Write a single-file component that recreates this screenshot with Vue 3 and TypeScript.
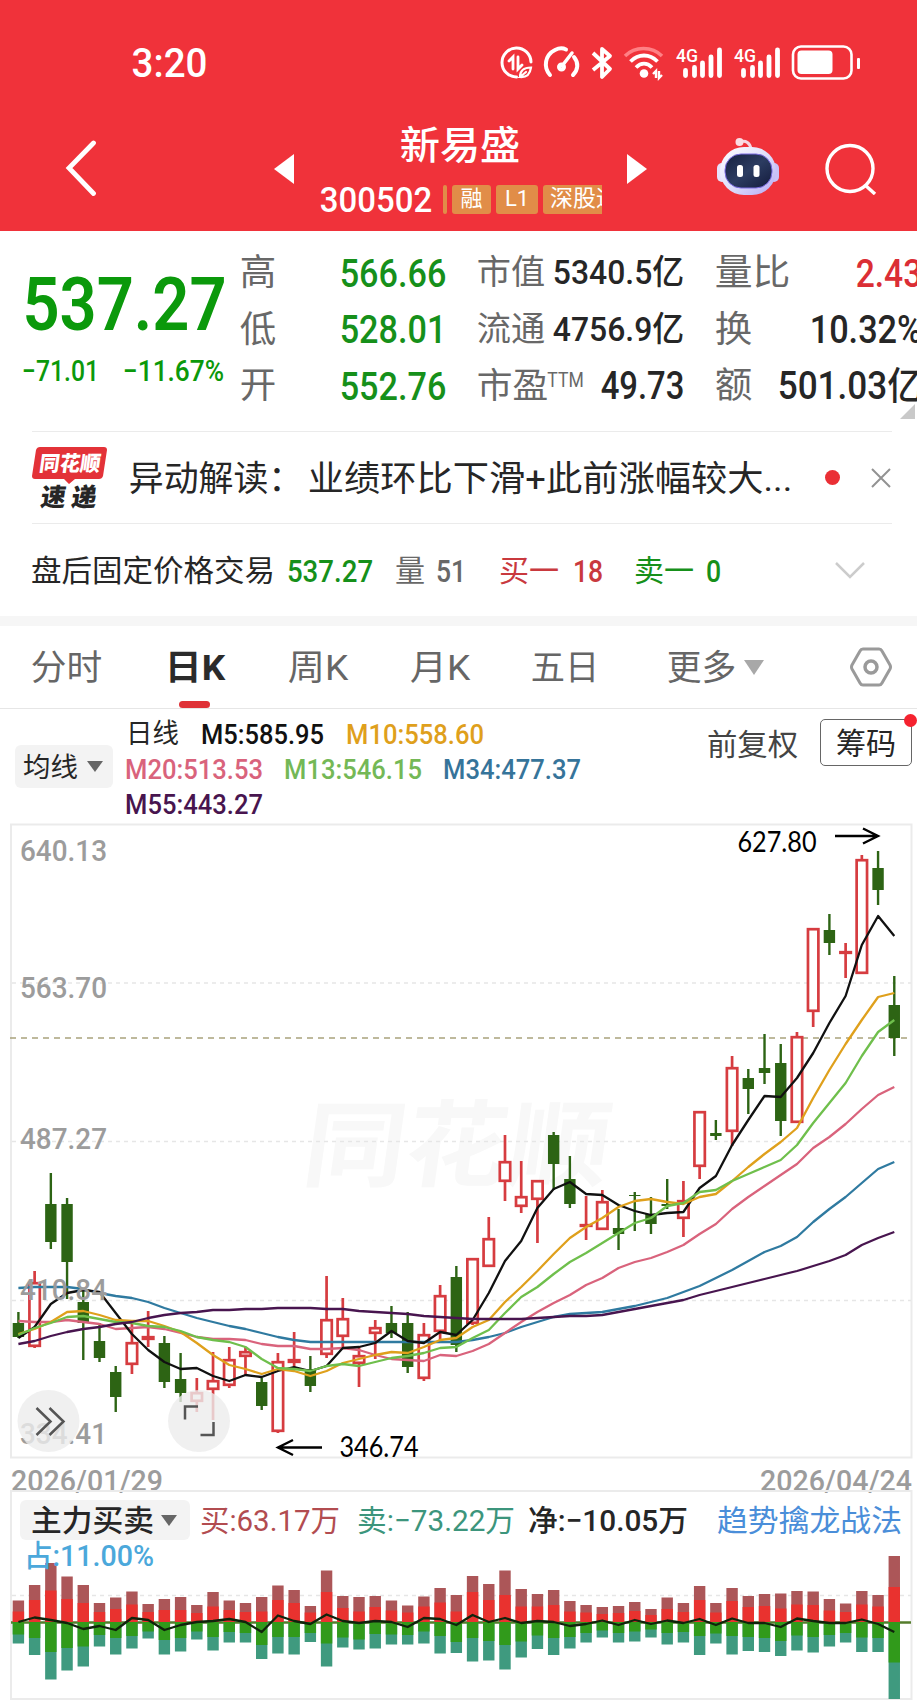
<script setup lang="ts">
import { h, type FunctionalComponent } from 'vue'

interface FitProps {
  t: string
  w: number
  s: number
}

// One line of text fitted to an exact width, centred on its own box.
const Fit: FunctionalComponent<FitProps> = (p) => {
  const pad = p.s * 0.035
  return h('svg', { width: p.w, height: p.s, style: 'display:block;overflow:visible;flex:none' }, [
    h(
      'text',
      {
        x: -pad,
        y: p.s * 0.86,
        'font-size': p.s,
        fill: 'currentColor',
        textLength: p.w + pad * 2,
        lengthAdjust: 'spacingAndGlyphs',
      },
      p.t,
    ),
  ])
}
Fit.props = ['t', 'w', 's']

type Kind = 'r' | 'g'
type Candle = [Kind, number, number, number, number]

const step = 16.22
const cx = (i: number): number => 18.4 + i * step

// kind, high, body top, body bottom, low
const candles: Candle[] = [
  ['g', 1312, 1323, 1337, 1338], ['r', 1271, 1282, 1347, 1348], ['g', 1173, 1204, 1242, 1249],
  ['g', 1198, 1204, 1262, 1299], ['g', 1291, 1302, 1323, 1360], ['g', 1323, 1341, 1358, 1362],
  ['g', 1366, 1372, 1397, 1412], ['r', 1323, 1342, 1365, 1374], ['r', 1311, 1336, 1340, 1347],
  ['g', 1336, 1343, 1382, 1388], ['g', 1353, 1379, 1393, 1402], ['r', 1378, 1392, 1402, 1412],
  ['r', 1352, 1380, 1390, 1420], ['r', 1347, 1359, 1386, 1388], ['r', 1347, 1351, 1357, 1375],
  ['g', 1378, 1382, 1406, 1410], ['r', 1353, 1361, 1432, 1433], ['r', 1332, 1359, 1363, 1367],
  ['g', 1356, 1369, 1386, 1392], ['r', 1276, 1319, 1355, 1358], ['r', 1298, 1318, 1337, 1347],
  ['r', 1347, 1355, 1364, 1387], ['r', 1320, 1327, 1334, 1359], ['g', 1306, 1323, 1333, 1338],
  ['g', 1312, 1323, 1367, 1373], ['r', 1323, 1334, 1379, 1381], ['r', 1285, 1295, 1332, 1341],
  ['g', 1266, 1277, 1345, 1352], ['r', 1258, 1258, 1324, 1325], ['r', 1217, 1238, 1267, 1267],
  ['r', 1135, 1161, 1182, 1201], ['r', 1161, 1196, 1207, 1213], ['r', 1180, 1180, 1200, 1243],
  ['g', 1132, 1135, 1164, 1190], ['g', 1156, 1179, 1204, 1208], ['r', 1196, 1224, 1227, 1240],
  ['r', 1190, 1201, 1230, 1230], ['g', 1209, 1228, 1234, 1250], ['g', 1192, 1195, 1196, 1231],
  ['g', 1197, 1214, 1224, 1234], ['g', 1179, 1204, 1206, 1209], ['r', 1181, 1200, 1219, 1237],
  ['r', 1111, 1111, 1167, 1179], ['g', 1120, 1133, 1136, 1140], ['r', 1056, 1067, 1132, 1146],
  ['g', 1069, 1078, 1089, 1114], ['g', 1034, 1068, 1073, 1084], ['g', 1044, 1063, 1121, 1136],
  ['r', 1032, 1036, 1123, 1123], ['r', 928, 928, 1012, 1027], ['g', 914, 930, 943, 955],
  ['r', 943, 951, 954, 978], ['r', 855, 859, 974, 974], ['g', 851, 868, 890, 905],
  ['g', 976, 1005, 1038, 1056],
]

const averages: { color: string; ys: number[] }[] = [
  { color: '#2f7aa0', ys: [1288, 1287, 1287, 1287, 1289, 1293, 1296, 1298, 1302, 1308, 1313, 1318, 1322, 1326, 1329, 1333, 1337, 1340, 1342, 1342, 1342, 1342, 1342, 1342, 1342, 1342, 1342, 1342, 1340, 1337, 1333, 1327, 1322, 1317, 1314, 1313, 1312, 1309, 1306, 1302, 1298, 1292, 1286, 1278, 1270, 1261, 1252, 1246, 1237, 1222, 1209, 1197, 1183, 1169, 1162] },
  { color: '#d9637c', ys: [1321, 1322, 1322, 1320, 1322, 1324, 1329, 1328, 1327, 1329, 1333, 1337, 1339, 1339, 1340, 1344, 1346, 1346, 1349, 1349, 1348, 1350, 1355, 1359, 1360, 1361, 1355, 1356, 1351, 1344, 1333, 1322, 1312, 1303, 1295, 1285, 1278, 1268, 1262, 1258, 1252, 1245, 1234, 1224, 1209, 1197, 1186, 1175, 1164, 1148, 1137, 1124, 1109, 1095, 1087] },
  { color: '#111111', ys: [1338, 1327, 1304, 1293, 1290, 1292, 1313, 1334, 1350, 1362, 1369, 1368, 1376, 1381, 1375, 1377, 1371, 1367, 1371, 1366, 1348, 1347, 1343, 1331, 1341, 1343, 1332, 1335, 1320, 1293, 1261, 1241, 1208, 1189, 1182, 1194, 1195, 1205, 1211, 1215, 1213, 1212, 1188, 1176, 1145, 1120, 1096, 1097, 1078, 1053, 1023, 996, 945, 916, 936] },
  { color: '#dfa01c', ys: [1334, 1329, 1322, 1312, 1311, 1315, 1320, 1321, 1321, 1326, 1332, 1343, 1355, 1365, 1369, 1374, 1369, 1371, 1376, 1371, 1363, 1359, 1355, 1352, 1353, 1347, 1340, 1338, 1327, 1320, 1302, 1287, 1271, 1254, 1238, 1227, 1218, 1207, 1201, 1199, 1202, 1204, 1197, 1194, 1181, 1167, 1154, 1142, 1128, 1098, 1070, 1044, 1020, 997, 993] },
  { color: '#6fbf4c', ys: [1335, 1328, 1323, 1317, 1316, 1319, 1322, 1323, 1326, 1327, 1331, 1337, 1340, 1342, 1347, 1359, 1368, 1369, 1371, 1366, 1364, 1366, 1362, 1358, 1356, 1353, 1348, 1347, 1338, 1330, 1313, 1297, 1287, 1274, 1262, 1253, 1243, 1233, 1223, 1218, 1206, 1203, 1192, 1190, 1181, 1174, 1167, 1160, 1145, 1123, 1103, 1083, 1056, 1032, 1020] },
  { color: '#48154f', ys: [1344, 1341, 1336, 1332, 1329, 1327, 1324, 1322, 1318, 1315, 1313, 1312, 1310, 1310, 1309, 1309, 1308, 1308, 1308, 1309, 1309, 1311, 1312, 1313, 1314, 1316, 1317, 1318, 1319, 1319, 1319, 1319, 1318, 1317, 1316, 1316, 1315, 1312, 1309, 1306, 1303, 1300, 1295, 1291, 1287, 1283, 1279, 1275, 1271, 1266, 1261, 1255, 1245, 1238, 1232] },
]

const points = (ys: number[]): string => ys.map((y, i) => `${cx(i).toFixed(1)},${y}`).join(' ')

// total buy, large buy, large sell, total sell, net
const flows: [number, number, number, number, number][] = [
  [21.5, 10.5, 12.5, 21.5, 0], [37, 22, 16, 33, 4.5], [59, 31.5, 30, 57.5, 2], [45.5, 23, 26, 48.5, -1],
  [37, 19, 24.5, 44.5, -7], [19, 10, 13, 24.5, -4], [24.5, 13, 16, 32.5, -8], [30.5, 17.5, 14, 26.5, 4],
  [18, 10, 9.5, 16.5, 2], [23, 12, 18, 32.5, -8], [25, 12, 16, 29.5, -3], [17, 9, 9.5, 17.5, 0],
  [30, 15.5, 15, 28.5, 1], [21.5, 12, 10, 20.5, 3], [19, 10, 11, 20.5, 0], [25, 10.5, 23, 37, -10],
  [36.5, 22, 15, 31.5, 6.5], [32, 19, 15, 32.5, 1], [16, 9.5, 11, 20, -2], [51.5, 30, 21.5, 44.5, 7.5],
  [26, 14, 15.5, 25.5, 1], [25, 10.5, 17.5, 27.5, -1], [26, 15, 12, 26.5, 1], [21.5, 11.5, 12.5, 22.5, 0],
  [16.5, 9.5, 13, 22.5, -5], [25.5, 15.5, 9.5, 21.5, 4], [34, 19.5, 14, 31.5, 3], [27, 10.5, 20, 31, -3],
  [46, 30, 16, 39.5, 7], [38, 22, 19, 38.5, 0], [51.5, 27, 23, 47.5, 4], [33, 15.5, 19.5, 35.5, -1],
  [28, 15.5, 13.5, 27, 1], [32, 17, 16, 33, 0], [21, 10.5, 15, 26.5, -4], [17, 9.5, 11, 20.5, -2],
  [15, 8, 8.5, 15.5, 1.5], [16, 9, 11, 20.5, -3], [20, 11, 9.5, 19.5, 2], [13, 7, 7.5, 15.5, -2],
  [24.5, 13, 11, 22.5, 1.5], [19, 10, 10, 20.5, -1], [36, 22, 14, 33, 3], [19, 9.5, 11.5, 21.5, -3],
  [34, 21, 14, 32.5, 3.5], [26, 15, 15, 29, -1], [28, 16, 16, 30, -1], [28.5, 13.5, 19, 34, -5],
  [31, 17.5, 13.5, 28.5, 3.5], [30.5, 17, 15, 30.5, 1], [23, 11.5, 13, 24.5, -1], [18.5, 10, 11, 20.5, -1],
  [31, 17.5, 15.5, 30, 2.5], [27, 15.5, 16, 30, -2], [66, 35, 40.5, 77, -10],
]
const net = points(flows.map((f) => 1622 - f[4]))

const axis = [
  { t: '640.13', y: 861 },
  { t: '563.70', y: 997.5 },
  { t: '487.27', y: 1148.5 },
  { t: '410.84', y: 1299.5 },
  { t: '334.41', y: 1443.5 },
]
</script>

<template>
  <main class="app">
    <header class="top">
      <div class="status">
        <Fit class="m" t="3:20" :w="73" :s="40" />
        <svg class="icons" width="370" height="44" viewBox="490 41 370 44" fill="none" stroke="#fff">
          <g stroke-width="3" stroke-linecap="round">
            <path d="M531 62a14.5 14.5 0 1 0-14.5 15" />
            <path d="M509 61l4-4v12M518 57v12l4-4" stroke-width="2.800" />
            <path d="M520 77c0-7 4-9.500 11-9.500-1 7-4 10-11 9.500l6-5" stroke-width="2.200" />
          </g>
          <g stroke-width="4" stroke-linecap="round">
            <path d="M550 75c-7-8-5-20 5-25 4-2 8-2 11-.5M574 57c5 6 4 13-1 18" />
            <path d="M572 53l-10 13" stroke-width="3.500" />
            <circle cx="561.500" cy="67" r="2.500" />
          </g>
          <path d="M593 53l17 16-8 8V49l8 7-17 14" stroke-width="3.800" stroke-linejoin="round" />
          <path d="M625 56c10-10 27-10 37 0" stroke="#ff8085" stroke-width="3.500" />
          <path d="M630.500 61.500c8-8 19-8 27 0M636 67.500c5-5 11-5 16 0" stroke-width="3.800" />
          <circle cx="644" cy="73.500" r="4.300" fill="#fff" stroke="none" />
          <path d="M653 74l3-3v7M659 71v7l3-3" stroke-width="2.400" />
          <g v-for="dx in [0, 58]" :key="dx" :transform="`translate(${dx} 0)`" stroke-width="4.800" stroke-linecap="round">
            <text class="net" x="676" y="61.500" textLength="22" lengthAdjust="spacingAndGlyphs">4G</text>
            <path d="M685.500 70.500v5M694.500 67.500v8M702.500 63v12.500M711 57v18.500M719.500 50v25.500" />
          </g>
          <rect x="793" y="46.500" width="58.500" height="32" rx="8" stroke-width="2.600" />
          <rect x="797.500" y="50.500" width="35" height="23.500" rx="4" fill="#fff" stroke="none" />
        </svg>
        <i class="nub"></i>
      </div>
      <div class="nav">
        <svg width="32" height="58" viewBox="0 0 32 58" fill="none" stroke="#fff" stroke-width="4.800" stroke-linecap="round"><path d="M28.500 3L4 28l24.500 25.500" /></svg>
        <svg width="20" height="30" viewBox="0 0 20 30" fill="#fff"><path d="M20 0v30L0 15z" /></svg>
        <div class="title">
          <Fit class="m" t="新易盛" :w="118" :s="38.500" />
          <div class="code">
            <Fit class="m" t="300502" :w="110" :s="34.500" />
            <span class="tags">
              <b class="tag sliver"></b><b class="tag">融</b><b class="tag l1">L1</b><b class="tag last">深股通</b>
            </span>
          </div>
        </div>
        <svg width="20" height="30" viewBox="0 0 20 30" fill="#fff"><path d="M0 0v30l20-15z" /></svg>
        <svg class="bot" width="62" height="58" viewBox="0 0 62 58">
          <defs>
            <linearGradient id="shell" x1="0" y1="0" x2="1" y2="1">
              <stop offset="0" stop-color="#fff" /><stop offset=".55" stop-color="#dcdcfb" /><stop offset="1" stop-color="#b4a6f3" />
            </linearGradient>
            <linearGradient id="visor" x1="0" y1="0" x2="1" y2="1">
              <stop offset="0" stop-color="#16203f" /><stop offset=".5" stop-color="#2c3c61" /><stop offset="1" stop-color="#131a3c" />
            </linearGradient>
          </defs>
          <path d="M23 4c6-2 10 1 11 7" fill="none" stroke="#f6d5e2" stroke-width="3" />
          <circle cx="22.500" cy="4" r="4" fill="#fbdde4" />
          <rect x="0" y="25" width="10" height="19" rx="5" fill="#e6e2fb" />
          <rect x="52" y="25" width="10" height="19" rx="5" fill="#c9c1f7" />
          <rect x="3" y="9" width="56" height="48" rx="24" fill="url(#shell)" />
          <rect x="8" y="16" width="47" height="34" rx="16" fill="url(#visor)" stroke="#7a6be0" stroke-width="1" />
          <rect x="20" y="27" width="6" height="12" rx="2.500" fill="#fff" /><rect x="36.500" y="27" width="6" height="12" rx="2.500" fill="#fff" />
        </svg>
        <svg width="52" height="52" viewBox="0 0 52 52" fill="none" stroke="#fff" stroke-width="3.400"><circle cx="25" cy="25.500" r="23" /><path d="M40 42l10 9" /></svg>
      </div>
    </header>

    <section class="quote">
      <div class="price">
        <Fit class="big" t="537.27" :w="199" :s="75" />
        <div class="change"><Fit class="m" t="−71.01" :w="75" :s="29.500" /><Fit class="m" t="−11.67%" :w="99" :s="29.500" /></div>
      </div>
      <div class="stats">
        <Fit class="lab" t="高" :w="34" :s="36" /><Fit class="up m" t="566.66" :w="104" :s="39" />
        <Fit class="lab" t="市值" :w="66" :s="34" /><Fit class="end m" t="5340.5亿" :w="129" :s="34" />
        <Fit class="lab" t="量比" :w="73" :s="36.500" /><Fit class="end red m" t="2.43" :w="64" :s="39" />
        <Fit class="lab" t="低" :w="34" :s="36" /><Fit class="up m" t="528.01" :w="104" :s="39" />
        <Fit class="lab" t="流通" :w="66" :s="34" /><Fit class="end m" t="4756.9亿" :w="129" :s="34" />
        <Fit class="lab" t="换" :w="35" :s="36.500" /><Fit class="end m" t="10.32%" :w="110" :s="38" />
        <Fit class="lab" t="开" :w="34" :s="36" /><Fit class="up m" t="552.76" :w="104" :s="39" />
        <span class="pe lab"><Fit t="市盈" :w="69" :s="35" /><Fit class="ttm" t="TTM" :w="35" :s="20" /></span><Fit class="end m" t="49.73" :w="81" :s="38" />
        <Fit class="lab" t="额" :w="35" :s="36.500" /><Fit class="end m" t="501.03亿" :w="142" :s="38" />
      </div>
      <i class="corner"></i>
    </section>

    <section class="news">
      <div class="logo">
        <svg width="76" height="38" viewBox="0 0 76 38">
          <path d="M8 0h64q3 0 3 3l-4 26q-1 3-4 3H43l-6 5-5-5H3q-3 0-3-3L4 3q1-3 4-3z" fill="#e33238" />
          <text class="brand" x="7" y="24.500" font-size="21" fill="#fff" textLength="61" lengthAdjust="spacingAndGlyphs" transform="skewX(-8) translate(3 0)">同花顺</text>
        </svg>
        <Fit class="brand slant" t="速 递" :w="54" :s="25" />
      </div>
      <Fit t="异动解读：" :w="172" :s="35.500" />
      <Fit t="业绩环比下滑+此前涨幅较大..." :w="482" :s="35.500" />
      <i class="dot"></i>
      <svg width="20" height="20" viewBox="0 0 20 20" stroke="#929292" stroke-width="2"><path d="M1 1l18 18M19 1L1 19" /></svg>
    </section>

    <section class="after">
      <Fit t="盘后固定价格交易" :w="242" :s="30" />
      <Fit class="m up" t="537.27" :w="84" :s="31" />
      <Fit class="lab" t="量" :w="28" :s="30" />
      <Fit class="lab m" t="51" :w="28" :s="31" />
      <Fit class="red2" t="买一" :w="58" :s="30" />
      <Fit class="red2 m" t="18" :w="28" :s="31" />
      <Fit class="up" t="卖一" :w="58" :s="30" />
      <Fit class="up m" t="0" :w="13" :s="31" />
      <svg width="30" height="18" viewBox="0 0 30 18" fill="none" stroke="#ccc" stroke-width="2.500"><path d="M1 2l14 14L29 2" /></svg>
    </section>

    <nav class="tabs">
      <Fit t="分时" :w="69" :s="35" />
      <span class="on"><Fit t="日K" :w="58" :s="35" /></span>
      <Fit t="周K" :w="58" :s="35" />
      <Fit t="月K" :w="58" :s="35" />
      <Fit t="五日" :w="66" :s="35" />
      <Fit t="更多" :w="67" :s="35" />
      <svg width="20" height="15" viewBox="0 0 20 15" fill="#a8a8a8"><path d="M0 0h20L10 15z" /></svg>
      <svg width="42" height="40" viewBox="0 0 42 40" fill="none" stroke="#9a9a9a" stroke-width="3"><path d="M13 2h16q2 0 3 2l8 14q1 2 0 4l-8 14q-1 2-3 2H13q-2 0-3-2L2 22q-1-2 0-4l8-14q1-2 3-2z" stroke-linejoin="round" /><circle cx="21" cy="20" r="6" stroke-width="3.500" /></svg>
    </nav>

    <section class="legend">
      <div class="pick avg"><Fit t="均线" :w="53" :s="27.500" /><i class="caret"></i></div>
      <div class="values">
        <div class="row one"><Fit class="plain" t="日线" :w="51" :s="27" /><Fit class="black" t="M5:585.95" :w="121" :s="28" /><Fit class="c10" t="M10:558.60" :w="136" :s="28" /></div>
        <div class="row"><Fit class="c20" t="M20:513.53" :w="136" :s="28" /><Fit class="c13" t="M13:546.15" :w="136" :s="28" /><Fit class="c34" t="M34:477.37" :w="136" :s="28" /></div>
        <div class="row"><Fit class="c55" t="M55:443.27" :w="136" :s="28" /></div>
      </div>
      <Fit class="adj" t="前复权" :w="89" :s="30" />
      <div class="chips"><Fit t="筹码" :w="58" :s="30" /><i></i></div>
    </section>

    <svg class="kline" width="917" height="642" viewBox="0 820 917 642">
      <text class="mark" x="300" y="1179" textLength="306" lengthAdjust="spacingAndGlyphs" transform="translate(300 1179) skewX(-8) translate(-300 -1179)">同花顺</text>
      <rect x="11" y="824.500" width="900.500" height="633" fill="none" stroke="#ebebeb" stroke-width="2" />
      <path d="M12 983H911M12 1141.500H911M12 1300.500H911" stroke="#e6e6e6" stroke-width="1.500" stroke-dasharray="4 4" />
      <path d="M10 1038H908" stroke="#a9a37c" stroke-width="1.700" stroke-dasharray="6 5" />
      <g v-for="(c, i) in candles" :key="i">
        <template v-if="c[0] === 'g'">
          <path :d="`M${cx(i)} ${c[1]}V${c[4]}`" stroke="#2d6414" stroke-width="2.400" />
          <rect :x="cx(i) - 5.700" :y="c[2]" width="11.400" :height="c[3] - c[2]" fill="#2d6414" />
        </template>
        <template v-else>
          <path :d="`M${cx(i)} ${c[1]}V${c[2]}M${cx(i)} ${c[3]}V${c[4]}`" stroke="#d63c40" stroke-width="2.700" />
          <rect :x="cx(i) - 5.200" :y="c[2] + 1.200" width="10.400" :height="Math.max(c[3] - c[2] - 2.400, 0.600)" fill="#fff" stroke="#d63c40" stroke-width="2.700" />
        </template>
      </g>
      <polyline v-for="a in averages" :key="a.color" :points="points(a.ys)" fill="none" :stroke="a.color" stroke-width="2.300" stroke-linejoin="round" />
      <text v-for="a in axis" :key="a.t" class="tick" x="20" :y="a.y" textLength="87" lengthAdjust="spacingAndGlyphs">{{ a.t }}</text>
      <text class="peak" x="737.500" y="852" textLength="79" lengthAdjust="spacingAndGlyphs">627.80</text>
      <text class="peak" x="339.500" y="1456.500" textLength="79" lengthAdjust="spacingAndGlyphs">346.74</text>
      <path d="M835 836h42M863 828.500l15 7.500-15 7.500M322 1447.500h-44M293 1440l-15 7.500 15 7.500" fill="none" stroke="#000" stroke-width="2.400" />
      <g fill="#ececec" fill-opacity=".8"><circle cx="48.500" cy="1421" r="31" /><circle cx="199" cy="1421" r="31" /></g>
      <path d="M36.500 1408l14 13.500-14 13.500M49.500 1408l14 13.500-14 13.500M185 1419.500v-13h13M200.500 1435h13v-13" fill="none" stroke="#555" stroke-width="2.500" />
    </svg>

    <div class="dates"><Fit t="2026/01/29" :w="150" :s="29.500" /><Fit t="2026/04/24" :w="150" :s="29.500" /></div>

    <section class="flow">
      <svg class="bars" width="917" height="212" viewBox="0 1490 917 212">
        <rect x="11" y="1491" width="900.500" height="208" fill="none" stroke="#ebebeb" stroke-width="2" />
        <path d="M12 1595.500H911" stroke="#e6e6e6" stroke-width="1.500" stroke-dasharray="4 4" />
        <path d="M11 1622.500H911" stroke="#557d2c" stroke-width="2.500" />
        <g v-for="(f, i) in flows" :key="i">
          <rect :x="cx(i) - 5.700" :y="1622 - f[0]" width="11.400" :height="f[0]" fill="#ac5658" />
          <rect :x="cx(i) - 5.700" :y="1622 - f[1]" width="11.400" :height="f[1]" fill="#e9322f" />
          <rect :x="cx(i) - 5.700" y="1622" width="11.400" :height="f[3]" fill="#3f9a7f" />
          <rect :x="cx(i) - 5.700" y="1622" width="11.400" :height="f[2]" fill="#319a1b" />
        </g>
        <polyline :points="net" fill="none" stroke="#10240c" stroke-width="2.300" stroke-linejoin="round" />
      </svg>
      <div class="figures">
        <div class="pick"><Fit t="主力买卖" :w="121" :s="30" /><i class="caret"></i></div>
        <Fit class="buy" t="买:63.17万" :w="138" :s="30" />
        <Fit class="sell" t="卖:−73.22万" :w="156" :s="30" />
        <Fit t="净:−10.05万" :w="158" :s="30" />
        <Fit class="tactic" t="趋势擒龙战法" :w="183" :s="30" />
      </div>
      <Fit class="share" t="占:11.00%" :w="128" :s="30" />
    </section>
  </main>
</template>

<style>
body { margin: 0; background: #fff; overflow: hidden; }
</style>

<style scoped>
.app { width: 917px; height: 1702px; overflow: hidden; background: #fff; color: #262626; font-family: Roboto, "Noto Sans CJK SC", sans-serif; }
.m { font-weight: 500; }
i { display: block; }
.top { height: 231px; background: #f0323a; color: #fff; }
.status { height: 85px; padding: 41px 50px 0 133px; box-sizing: border-box; display: flex; align-items: center; }
.icons { margin-left: 284px; flex: none; }
.nub { width: 3px; height: 11px; background: #fff; border-radius: 1px; margin-left: -3px; }
.net { font-size: 19px; font-weight: 500; fill: #fff; stroke: none; }
.nav { height: 146px; padding-left: 65px; display: grid; grid-template-columns: 209px 47px 306px 90px 108px 60px; align-items: center; box-sizing: border-box; }
.nav > svg { position: relative; top: 11px; }
.nav > .bot { top: 9px; }
.title { height: 146px; padding-top: 41px; box-sizing: border-box; }
.title > svg { margin-left: 80px; }
.code { display: flex; align-items: center; margin-top: 18px; height: 34px; }
.tags { display: flex; gap: 5px; width: 159px; margin-left: 12px; overflow: hidden; }
.tag { flex: none; height: 29px; width: 39px; border-radius: 3px; background: #e18d48; font-size: 22px; font-weight: 400; line-height: 28px; text-align: center; box-sizing: border-box; }
.sliver { width: 4px; }
.l1 { width: 42px; }
.last { width: 90px; padding-left: 7px; text-align: left; font-size: 23px; }
.quote { height: 200px; display: grid; grid-template-columns: 241px 676px; position: relative; }
.price { padding: 34px 0 0 25px; color: #0b990b; }
.big { font-weight: 600; }
.change { display: flex; gap: 26px; margin: 16px 0 0 -2px; }
.stats { padding-top: 13px; display: grid; grid-template-columns: 100px 137px 92px 113px 93px 145px; grid-auto-rows: 56.5px; align-items: center; }
.stats > .lab:nth-child(6n + 5) { margin-left: 33px; }
.lab { color: #686868; }
.up { color: #16901a; }
.end { justify-self: end; }
.red { color: #db2e35; }
.red2 { color: #c9393e; }
.pe { display: flex; gap: 1px; }
.ttm { margin-top: 2px; }
.corner { position: absolute; right: 2px; bottom: 12px; border-left: 15px solid transparent; border-bottom: 15px solid #c9c9c9; }
.news { margin: 0 25px 0 32px; height: 91px; border: solid #ebebeb; border-width: 1px 0; display: grid; grid-template-columns: 98px 179px 516px 46px 22px; align-items: center; }
.logo { display: flex; flex-direction: column; }
.brand { font-weight: 900; font-family: "Noto Sans CJK SC", sans-serif; }
.slant { margin: -1px 0 0 10px; transform: skewX(-8deg); }
.dot { width: 15px; height: 15px; border-radius: 50%; background: #ea2f35; }
.after { height: 92px; padding-left: 32px; display: grid; grid-template-columns: 256px 108px 41px 63px 74px 61px 72px 128px 30px; align-items: center; border-bottom: 10px solid #f6f6f6; }
.tabs { height: 82px; border-bottom: 1px solid #e6e6e6; padding-left: 32px; display: grid; grid-template-columns: 134px 123px 122px 121px 136px 76px 106px 42px; align-items: center; color: #666; }
.on { color: #2b2b2b; font-weight: 700; position: relative; }
.on::after { content: ""; position: absolute; left: 13px; bottom: -23px; width: 31px; height: 7px; border-radius: 4px; background: #df3237; }
.legend { height: 111px; display: grid; grid-template-columns: 111px 582px 112px 92px; padding-left: 15px; align-items: start; }
.pick { background: #f3f3f3; border-radius: 6px; display: flex; align-items: center; justify-content: space-between; box-sizing: border-box; }
.avg { width: 98px; height: 43px; margin-top: 36px; padding: 0 10px 0 9px; }
.caret { border: 8px solid transparent; border-top: 11px solid #666; border-bottom: 0; }
.values { padding-top: 7px; }
.row { display: flex; gap: 23px; height: 35px; align-items: center; font-weight: 500; }
.row.one { padding-left: 1px; gap: 24px; }
.plain { font-weight: 400; }
.black { color: #111; }
.c10 { color: #dfa01c; }
.c20 { color: #d9637c; }
.c13 { color: #74b856; }
.c34 { color: #36749a; }
.c55 { color: #48154f; }
.adj { margin-top: 20px; color: #444; }
.chips { position: relative; width: 92px; height: 47px; margin-top: 10px; border: 1.5px solid #666; border-radius: 5px; box-sizing: border-box; display: flex; align-items: center; justify-content: center; }
.chips i { position: absolute; width: 13px; height: 13px; border-radius: 50%; right: -6px; top: -6px; background: #f5222f; }
.kline { display: block; }
.mark { font: 700 94px "Noto Sans CJK SC", sans-serif; fill: #f8f8f8; }
.tick { font-size: 29.5px; font-weight: 500; fill: #9c9c9c; }
.peak { font: 28px Lato, sans-serif; fill: #000; }
.dates { height: 28px; padding: 4px 6px 0 12px; display: flex; justify-content: space-between; color: #9c9c9c; font-weight: 500; box-sizing: border-box; }
.flow { height: 212px; position: relative; }
.bars { position: absolute; left: 0; top: 0; }
.figures { position: relative; padding: 10px 0 0 20px; display: grid; grid-template-columns: 181px 157px 171px 189px 185px; align-items: center; font-weight: 500; }
.figures .pick { width: 170px; height: 40px; padding: 0 13px 0 12px; }
.buy { color: #b24c50; font-weight: 400; }
.sell { color: #3c957c; font-weight: 400; }
.tactic { color: #4a8ed9; font-weight: 400; }
.share { position: relative; margin-left: 25px; color: #4ba8db; font-weight: 500; }
</style>
